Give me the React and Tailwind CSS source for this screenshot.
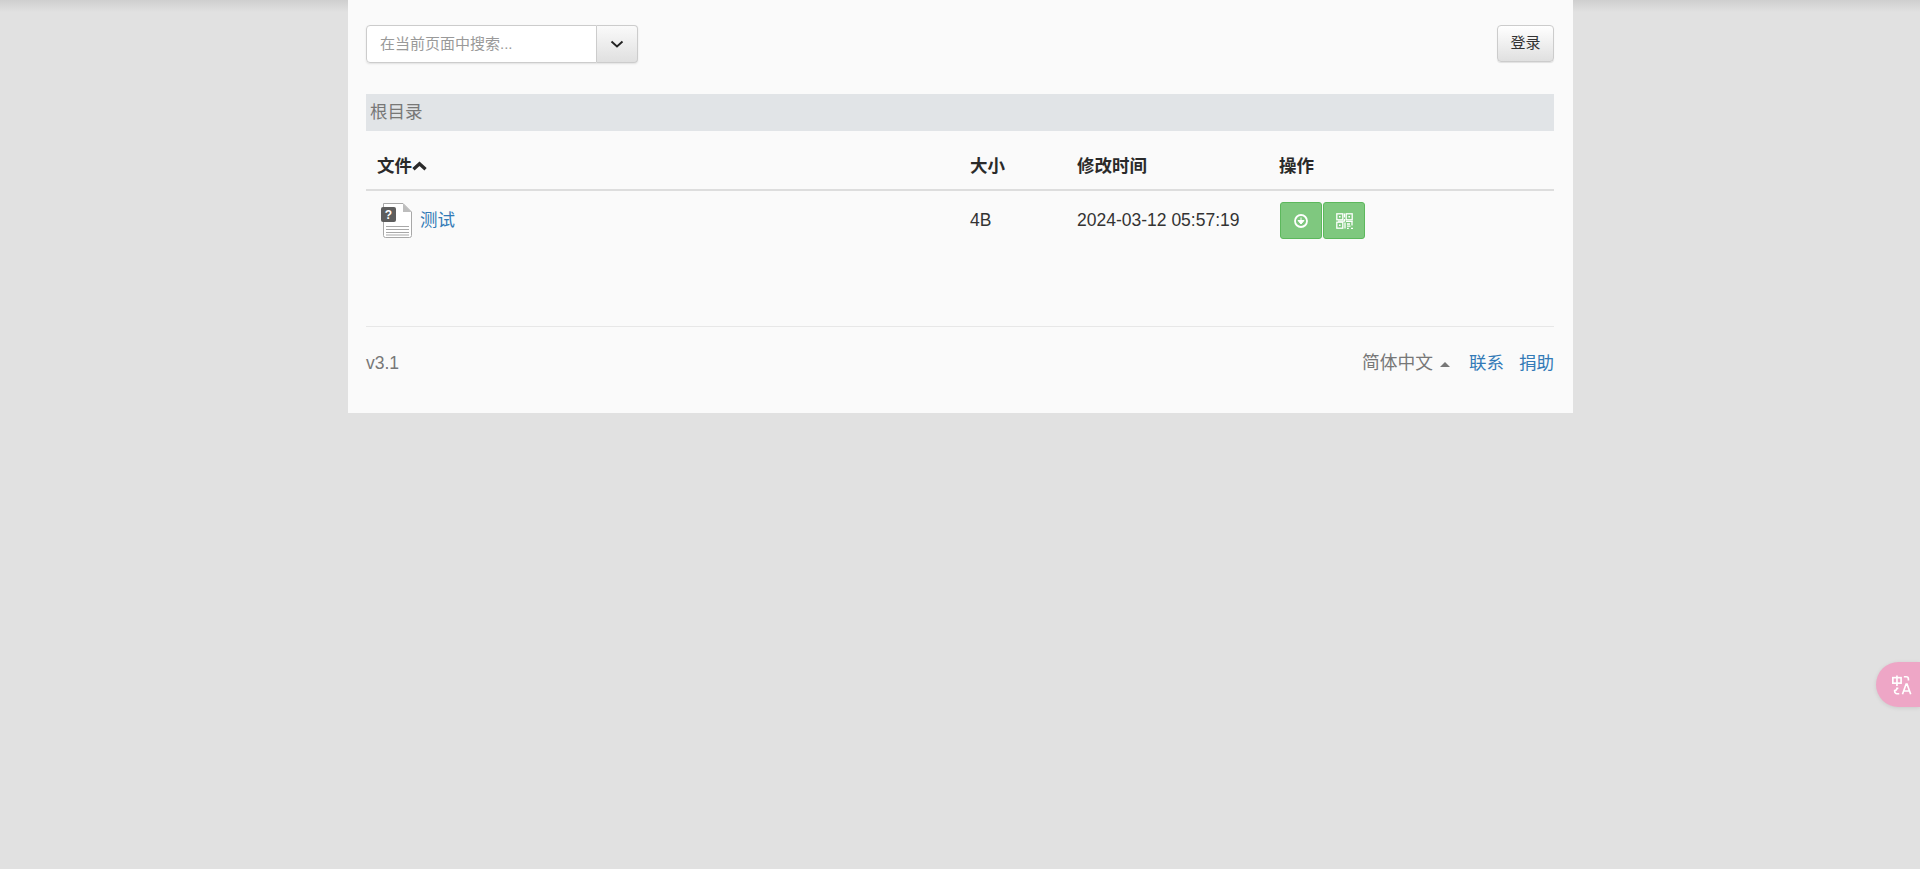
const sans = "font-['Liberation_Sans','Noto_Sans_CJK_SC',sans-serif]";

function FileIcon() {
  return (
    <svg width="31" height="35" viewBox="0 0 31 35" className="block shrink-0">
      <path d="M2.500 0.500H22L30.500 9V32.500a2 2 0 0 1-2 2H4.500a2 2 0 0 1-2-2Z" fill="#fff" stroke="#a8a8a8" strokeWidth="1" />
      <path d="M22 0.500V9H30.500Z" fill="#bdbdbd" />
      <rect x="0" y="4" width="15" height="15" rx="2" fill="#5d5d5d" />
      <text x="7.500" y="15.500" textAnchor="middle" fill="#fff" fontSize="12" fontWeight="700" fontFamily="Liberation Sans">?</text>
      <path d="M5 23.500H28M5 26.500H28M5 29.500H28M5 32H28" stroke="#a8a8a8" strokeWidth="1" />
    </svg>
  );
}

function DownloadIcon() {
  return (
    <svg width="16" height="16" viewBox="0 0 16 16">
      <circle cx="8" cy="8" r="6" fill="none" stroke="#fff" strokeWidth="1.800" />
      <path d="M8 4.500V8M5 7.500H11L8 11Z" fill="#fff" stroke="#fff" strokeWidth="1" />
    </svg>
  );
}

function QrIcon() {
  return (
    <svg width="17" height="16" viewBox="0 0 17 16" fill="none" stroke="#fff" strokeWidth="1.300">
      <rect x="0.800" y="0.800" width="6" height="6" />
      <rect x="0.800" y="9.200" width="6" height="6" />
      <rect x="10.200" y="0.800" width="6" height="6" />
      <path d="M3 3h1.600v1.600H3ZM3 11.400h1.600V13H3ZM12.400 3H14v1.600h-1.600Z" fill="#fff" stroke="none" />
      <path d="M8.500 0.500v4M8.500 6v2.200H2M10 8.300h6.800M16 9v3.500M9 9.500v6M11 11h3M11 13.200h3.500M11 15.300h1.800M15 15.300h2" />
    </svg>
  );
}

function Chevron({ className, width = 14, height = 10, sw = 1.900, d = "M1.500 2.500 7 7.500 12.500 2.500" }) {
  return (
    <svg width={width} height={height} viewBox="0 0 14 10" fill="none" stroke="currentColor" strokeWidth={sw} className={className}>
      <path d={d} />
    </svg>
  );
}

export default function App() {
  return (
    <div className={`${sans} relative min-h-[869px] bg-[#e1e1e1] text-[17.5px] text-[#333]`}>
      <div className="absolute inset-x-0 top-0 h-3 bg-gradient-to-b from-[#cfcfcf] to-[#e1e1e1]" />
      <main className="relative ml-[348px] h-[413px] w-[1225px] bg-[#fafafa] pl-[18px] pr-[19px] pt-[25px]">
        <div className="flex items-start justify-between">
          <div className="flex h-[38px] w-[272px] rounded-[4px] shadow-[0_1px_2px_rgba(0,0,0,0.1)]">
            <div className="flex flex-1 items-center rounded-l-[4px] border border-[#ccc] bg-white pl-[13px] text-[15px] text-[#999]">
              在当前页面中搜索...
            </div>
            <div className="flex w-[41px] items-center justify-center rounded-r-[4px] border border-l-0 border-[#ccc] bg-gradient-to-b from-[#fafafa] to-[#e0e0e0] text-[#222]">
              <Chevron />
            </div>
          </div>
          <button className="flex h-[37px] w-[57px] items-center justify-center rounded-[4px] border border-[#ccc] bg-gradient-to-b from-white to-[#e0e0e0] text-[15px] text-[#333] shadow-[0_1px_1px_rgba(0,0,0,0.1)]">
            登录
          </button>
        </div>

        <div className="mt-[31px] flex h-[37px] items-center bg-[#e1e4e7] pl-[4px] text-[#777]">根目录</div>

        <table className="mt-[11px] w-full table-fixed border-collapse">
          <thead>
            <tr className="h-[48px] border-b-2 border-[#ddd] text-left font-bold text-[#2a2a2a]">
              <th className="w-[593px] pl-[11px] pt-[2px]">
                <span className="flex items-center">
                  文件
                  <Chevron className="-ml-px" width={17} height={11} sw={3} d="M1.500 7.500 7 2.500 12.500 7.500" />
                </span>
              </th>
              <th className="w-[107px] pl-[11px] pt-[2px]">大小</th>
              <th className="w-[202px] pl-[11px] pt-[2px]">修改时间</th>
              <th className="pl-[11px] pt-[2px]">操作</th>
            </tr>
          </thead>
          <tbody>
            <tr className="h-[60px]">
              <td className="pl-[15px]">
                <div className="flex items-center gap-[8px]">
                  <FileIcon />
                  <a className="text-[#337ab7]">测试</a>
                </div>
              </td>
              <td className="pl-[11px]">4B</td>
              <td className="pl-[11px]">2024-03-12 05:57:19</td>
              <td className="pl-[12px]">
                <div className="flex gap-px">
                  <span className="flex h-[37px] w-[42px] items-center justify-center rounded-[3px] border border-[#5cb85c] bg-[#7fc87f]">
                    <DownloadIcon />
                  </span>
                  <span className="flex h-[37px] w-[42px] items-center justify-center rounded-[3px] border border-[#5cb85c] bg-[#7fc87f]">
                    <QrIcon />
                  </span>
                </div>
              </td>
            </tr>
          </tbody>
        </table>

        <footer className="mt-[76px] flex items-start justify-between border-t border-[#e7e7e7] pt-[24px] leading-[25px] text-[#777]">
          <span>v3.1</span>
          <div className="flex items-center">
            <span className="text-[17.75px]">简体中文</span>
            <span className="ml-[7px] mt-[2px] h-0 w-0 border-x-[5px] border-b-[5px] border-x-transparent border-b-[#777]" />
            <a className="ml-[19px] text-[#337ab7]">联系</a>
            <a className="ml-[15px] text-[#337ab7]">捐助</a>
          </div>
        </footer>
      </main>

      <div className="absolute right-0 top-[662px] flex h-[45px] w-[44px] items-center justify-start rounded-l-[23px] bg-[#eea6c6] pl-[15px] shadow-[0_1px_4px_rgba(0,0,0,0.1)]">
        <svg width="22" height="22" viewBox="0 0 24 24" fill="none" stroke="#fff" strokeWidth="1.800">
          <rect x="2" y="4" width="9" height="6" />
          <path d="M6.500 1.500V13M14 3h2.500a2.500 2.500 0 0 1 2.500 2.500V7M8 15.500H6.500A2.500 2.500 0 0 1 4 18v1a2.500 2.500 0 0 0 2.500 2.500H9M12.500 22l4-11h1l4 11M14 18.500h6" />
        </svg>
      </div>
    </div>
  );
}
